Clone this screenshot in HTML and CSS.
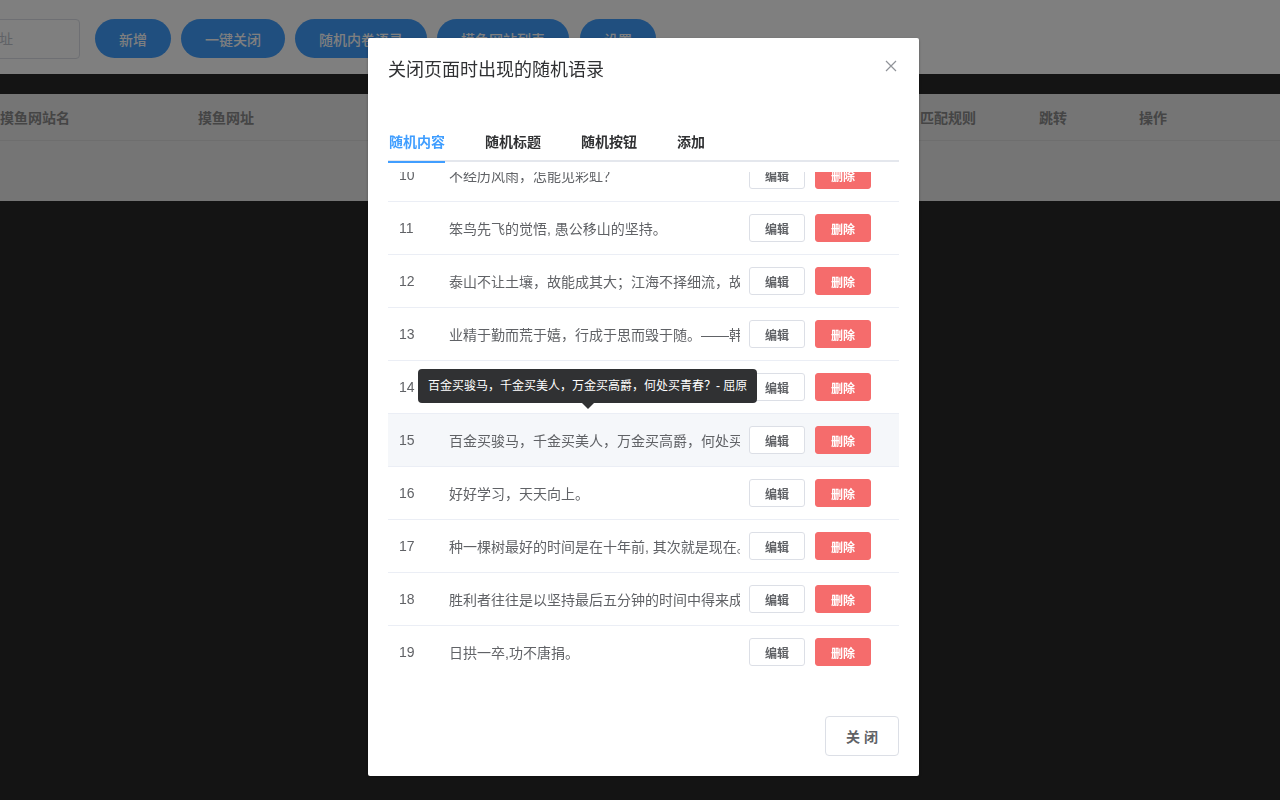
FILE: index.html
```html
<!DOCTYPE html>
<html lang="zh-CN">
<head>
<meta charset="utf-8">
<title>摸鱼</title>
<link rel="stylesheet" href="styles.css">
</head>
<body>
<div class="page">
  <header class="toolbar">
    <input class="search" type="text" placeholder="摸鱼网址">
    <button class="pill">新增</button>
    <button class="pill">一键关闭</button>
    <button class="pill">随机内卷语录</button>
    <button class="pill">摸鱼网站列表</button>
    <button class="pill">设置</button>
  </header>
  <div class="gap-strip"></div>
  <div class="table">
    <div class="thead">
      <div class="th c1">摸鱼网站名</div>
      <div class="th c2">摸鱼网址</div>
      <div class="th c3">匹配规则</div>
      <div class="th c4">跳转</div>
      <div class="th c5">操作</div>
    </div>
    <div class="tbody-empty"></div>
  </div>
</div>

<div class="overlay">
  <div class="dialog">
    <div class="dlg-header">
      <span class="dlg-title">关闭页面时出现的随机语录</span>
      <button class="dlg-close" aria-label="关闭">
        <svg width="12" height="12" viewBox="0 0 12 12"><path d="M1 1L11 11M11 1L1 11" stroke="#909399" stroke-width="1.2" fill="none"/></svg>
      </button>
    </div>
    <div class="dlg-body">
      <div class="tabs">
        <div class="tab active">随机内容</div>
        <div class="tab">随机标题</div>
        <div class="tab">随机按钮</div>
        <div class="tab">添加</div>
      </div>
      <div class="list">
        <div class="list-inner">
          <div class="row"><div class="num">10</div><div class="txt"><span>不经历风雨，怎能见彩虹？</span></div><div class="ops"><button class="btn-edit">编辑</button><button class="btn-del">删除</button></div></div>
          <div class="row"><div class="num">11</div><div class="txt"><span>笨鸟先飞的觉悟, 愚公移山的坚持。</span></div><div class="ops"><button class="btn-edit">编辑</button><button class="btn-del">删除</button></div></div>
          <div class="row"><div class="num">12</div><div class="txt"><span>泰山不让土壤，故能成其大；江海不择细流，故能就其深。</span></div><div class="ops"><button class="btn-edit">编辑</button><button class="btn-del">删除</button></div></div>
          <div class="row"><div class="num">13</div><div class="txt"><span>业精于勤而荒于嬉，行成于思而毁于随。——韩愈</span></div><div class="ops"><button class="btn-edit">编辑</button><button class="btn-del">删除</button></div></div>
          <div class="row"><div class="num">14</div><div class="txt"><span>少壮不努力，老大徒伤悲。</span></div><div class="ops"><button class="btn-edit">编辑</button><button class="btn-del">删除</button></div></div>
          <div class="row hover"><div class="num">15</div><div class="txt"><span>百金买骏马，千金买美人，万金买高爵，何处买青春？- 屈原</span></div><div class="ops"><button class="btn-edit">编辑</button><button class="btn-del">删除</button></div></div>
          <div class="row"><div class="num">16</div><div class="txt"><span>好好学习，天天向上。</span></div><div class="ops"><button class="btn-edit">编辑</button><button class="btn-del">删除</button></div></div>
          <div class="row"><div class="num">17</div><div class="txt"><span>种一棵树最好的时间是在十年前, 其次就是现在。</span></div><div class="ops"><button class="btn-edit">编辑</button><button class="btn-del">删除</button></div></div>
          <div class="row"><div class="num">18</div><div class="txt"><span>胜利者往往是以坚持最后五分钟的时间中得来成功。</span></div><div class="ops"><button class="btn-edit">编辑</button><button class="btn-del">删除</button></div></div>
          <div class="row last"><div class="num">19</div><div class="txt"><span>日拱一卒,功不唐捐。</span></div><div class="ops"><button class="btn-edit">编辑</button><button class="btn-del">删除</button></div></div>
        </div>
      </div>
      <div class="tooltip">百金买骏马，千金买美人，万金买高爵，何处买青春？- 屈原</div>
    </div>
    <div class="dlg-footer">
      <button class="btn-close">关 闭</button>
    </div>
  </div>
</div>
</body>
</html>
```

FILE: styles.css
```css
* { box-sizing: border-box; }
html, body {
  margin: 0;
  padding: 0;
  width: 1280px;
  height: 800px;
  overflow: hidden;
  background: #282828;
  font-family: "Liberation Sans", "Noto Sans CJK SC", sans-serif;
}
button {
  font-family: "Liberation Sans", "Noto Sans CJK SC", sans-serif;
  cursor: pointer;
}

/* background page */
.page {
  width: 1280px;
}
.toolbar {
  height: 74px;
  background: #ffffff;
  display: flex;
  align-items: center;
  gap: 10px;
  padding-top: 3px;
}
.search {
  width: 139px;
  height: 40px;
  margin-left: -59px;
  margin-right: 5px;
  border: 1px solid #dcdfe6;
  border-radius: 4px;
  padding: 0 15px;
  font-size: 14px;
  font-family: "Liberation Sans", "Noto Sans CJK SC", sans-serif;
  color: #606266;
  background: #fff;
}
.search::placeholder { color: #c0c4cc; }
.pill {
  height: 39px;
  padding: 0 24px;
  border: none;
  border-radius: 20px;
  background: #409eff;
  color: #ffffff;
  font-size: 14px;
  font-weight: 500;
}
.pill:last-child { margin-left: 1px; }
.gap-strip {
  height: 20px;
  background: #282828;
}
.table {
  background: #ebebeb;
}
.thead {
  display: flex;
  height: 47px;
  align-items: center;
  border-bottom: 1px solid #dcdcdc;
}
.th {
  font-size: 14px;
  font-weight: bold;
  color: #8a8a8a;
}
.c1 { width: 198px; }
.c2 { width: 722px; }
.c3 { width: 119px; }
.c4 { width: 100px; }
.c5 { flex: 1; }
.tbody-empty {
  height: 60px;
}

/* overlay + dialog */
.overlay {
  position: fixed;
  inset: 0;
  background: rgba(0, 0, 0, 0.5);
}
.dialog {
  position: absolute;
  left: 368px;
  top: 38px;
  width: 551px;
  background: #ffffff;
  border-radius: 2px;
  box-shadow: 0 1px 3px rgba(0, 0, 0, 0.3);
  display: flex;
  flex-direction: column;
}
.dlg-header {
  position: relative;
  padding: 20px 20px 10px;
}
.dlg-title {
  display: block;
  font-size: 18px;
  line-height: 24px;
  color: #303133;
}
.dlg-close {
  position: absolute;
  top: 22px;
  right: 22px;
  width: 12px;
  height: 12px;
  padding: 0;
  border: none;
  background: transparent;
  display: flex;
}
.dlg-body {
  position: relative;
  padding: 30px 20px 28px;
}
.tabs {
  display: flex;
  height: 40px;
  align-items: center;
  border-bottom: 2px solid #e4e7ed;
  margin-bottom: 10px;
}
.tab {
  position: relative;
  height: 40px;
  line-height: 42px;
  padding: 0 20px;
  font-size: 14px;
  font-weight: bold;
  color: #303133;
}
.tab:first-child { padding-left: 1px; }
.tab.active { color: #409eff; }
.tab.active::after {
  content: "";
  position: absolute;
  left: 0;
  right: 20px;
  bottom: -2px;
  height: 2px;
  background: #409eff;
}
.list {
  height: 506px;
  overflow: hidden;
}
.list-inner {
  margin-top: -23px;
}
.row {
  display: flex;
  align-items: center;
  height: 53px;
  border-bottom: 1px solid #ebeef5;
  font-size: 14px;
  color: #606266;
}
.row.hover { background: #f5f7fa; }
.num {
  width: 51px;
  padding-left: 11px;
}
.txt {
  width: 301px;
  overflow: hidden;
  white-space: nowrap;
  padding-left: 10px;
}
.ops {
  display: flex;
  gap: 10px;
  padding-left: 9px;
}
.btn-edit, .btn-del {
  width: 56px;
  height: 28px;
  padding: 0;
  border-radius: 3px;
  font-size: 12px;
  font-weight: bold;
}
.btn-edit {
  background: #ffffff;
  border: 1px solid #dcdfe6;
  color: #606266;
}
.btn-del {
  background: #f56c6c;
  border: 1px solid #f56c6c;
  color: #ffffff;
}
.tooltip {
  position: absolute;
  left: 50px;
  top: 277px;
  padding: 10px;
  background: #303133;
  color: #ffffff;
  font-size: 12px;
  line-height: 14px;
  border-radius: 4px;
  white-space: nowrap;
}
.tooltip::after {
  content: "";
  position: absolute;
  left: 50%;
  bottom: -6px;
  margin-left: -6px;
  border-left: 6px solid transparent;
  border-right: 6px solid transparent;
  border-top: 6px solid #303133;
}
.dlg-footer {
  display: flex;
  justify-content: flex-end;
  padding: 10px 20px 20px;
}
.btn-close {
  width: 74px;
  height: 40px;
  padding: 0;
  border: 1px solid #dcdfe6;
  border-radius: 4px;
  background: #fff;
  color: #606266;
  font-size: 14px;
  font-weight: bold;
}
```
